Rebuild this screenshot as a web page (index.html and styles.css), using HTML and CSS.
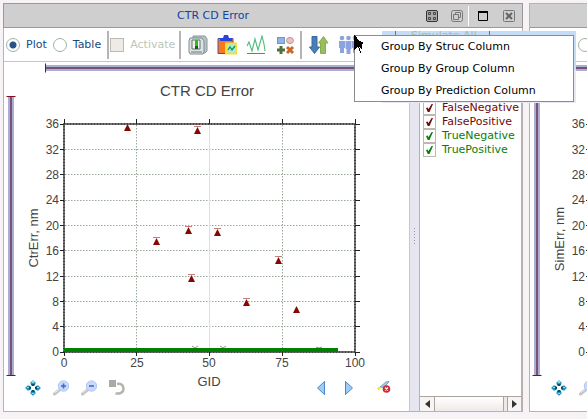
FILE: index.html
```html
<!DOCTYPE html>
<html lang="en">
<head>
<meta charset="utf-8">
<title>CTR CD Error</title>
<link rel="stylesheet" href="styles.css">
</head>
<body>
<svg class="defs" aria-hidden="true">
  <defs>
    <symbol id="i-move" viewBox="0 0 16 16">
      <g fill="#2595bf" stroke="#b9dbe8" stroke-width=".6">
        <path d="M8 0l3 3-1.500 2.500h-3L5 3z"/><path d="M8 16l3-3-1.500-2.500h-3L5 13z"/>
        <path d="M0 8l3-3 2.500 1.500v3L3 11z"/><path d="M16 8l-3-3-2.500 1.500v3L13 11z"/>
      </g>
      <path d="M6 4h4L9 6H7zM6 12h4l-1-2H7zM4 6v4l2-1V7zM12 6v4l-2-1V7z" fill="#0b5268"/>
      <path d="M7 1h2v2H7zM2 7h2v1H2zM12 7h2v1h-2zM7 13h2v1H7z" fill="#7fe0f5"/>
    </symbol>
    <symbol id="i-lens" viewBox="0 0 16 16">
      <path d="M1.500 14L7 9.500" stroke="#c4c4c4" stroke-width="3" stroke-linecap="round"/>
      <path d="M1.500 13L6 9.500" stroke="#e8e8e8" stroke-width="1"/>
      <circle cx="10.500" cy="6" r="5.200" fill="#c9d9fc" stroke="#b4c6f2"/>
      <path d="M8 6h5" stroke="#3d6fc8" stroke-width="1.600"/>
    </symbol>
  </defs>
</svg>
<main class="desktop">
  <section class="panel main-panel">
    <header class="titlebar">
      <h1>CTR CD Error</h1>
      <div class="window-buttons">
        <button aria-label="Tile"><svg width="12" height="12" viewBox="0 0 12 12" fill="none" stroke="#333"><rect x=".5" y=".5" width="11" height="11" rx="1.500" fill="#aaa"/><path d="M2.500 2.500h2v2h-2zM7.500 2.500h2v2h-2zM2.500 7.500h2v2h-2zM7.500 7.500h2v2h-2z" stroke="#444"/></svg></button>
        <button aria-label="Float"><svg width="12" height="12" viewBox="0 0 12 12" fill="none" stroke="#777"><rect x=".5" y=".5" width="11" height="11" rx="2"/><path d="M4.500 4V2.500h5v5H8M2.500 4.500h5v5h-5z"/></svg></button>
        <i class="window-sep"></i>
        <button aria-label="Maximize"><svg width="10" height="10" viewBox="0 0 10 10" fill="none" stroke="#000"><path d="M.5 1v8.500h9V1"/><path d="M0 1h10" stroke-width="2"/></svg></button>
        <button class="close" aria-label="Close"><svg width="12" height="12" viewBox="0 0 12 12" fill="none" stroke="#777"><rect x=".5" y=".5" width="11" height="11" rx="1"/><path d="M3 3l6 6M9 3L3 9" stroke="#666" stroke-width="2"/></svg></button>
      </div>
    </header>
    <div class="toolbar">
      <label class="choice"><input type="radio" name="view" checked>Plot</label>
      <label class="choice"><input type="radio" name="view">Table</label>
      <i class="sep"></i>
      <label class="choice off"><input type="checkbox" disabled>Activate</label>
      <i class="sep"></i>
      <div class="tools">
        <button aria-label="Save"><svg width="20" height="20" viewBox="0 0 20 20"><path d="M5 1h12l2 3v12l-2 2H5z" fill="#b9c4c8" stroke="#87969b"/><path d="M2 3h12l2 3v11l-1 2H2l-1-2V6z" fill="#dce2e5" stroke="#7d8b91"/><path d="M4 5h8v9H4z" fill="#eef3ee" stroke="#63746e"/><path d="M7 5h3v9H7z" fill="#32bb20"/><path d="M7 11h3v3H7z" fill="#195b18"/><path d="M3 17h11" stroke="#6c777d"/></svg></button>
        <button aria-label="Copy plot"><svg width="20" height="20" viewBox="0 0 20 20"><path d="M1 3.500h15v15H1z" fill="#f67a1c" stroke="#5848a0"/><path d="M3 6V3h3l1-3h4l1 3h3v3z" fill="#2946d8"/><rect x="9" y="8.500" width="10" height="10" fill="#a9e8ee" stroke="#efe238" stroke-width="2"/><path d="M11 15l2-3 2 3 3-4" fill="none" stroke="#19913f" stroke-width="1.300"/></svg></button>
        <button aria-label="Curve"><svg width="20" height="20" viewBox="0 0 20 20" fill="none"><path d="M1 11l2-4 3 9 3-12 3 11 4-14 2 8 1 7" stroke="#4dbd79" stroke-width="1.100"/><path d="M1 18.500h18" stroke="#777"/></svg></button>
        <button aria-label="Shapes"><svg width="20" height="20" viewBox="0 0 20 20"><rect x="2.500" y="2.500" width="7" height="6" fill="#8cb5ed" stroke="#7595bc"/><ellipse cx="15" cy="5.500" rx="3.500" ry="3" fill="#f2bfc1" stroke="#bd9297"/><path d="M6 11v8M2 15h8" stroke="#4e7041" stroke-width="3"/><path d="M12 12l6 6M18 12l-6 6" stroke="#cd6628" stroke-width="3"/></svg></button>
      </div>
      <i class="sep"></i>
      <div class="tools">
        <button aria-label="Sort"><svg width="20" height="20" viewBox="0 0 20 20"><path d="M3 1.500h5V12h2.500l-5 6.500L.5 12H3z" fill="#467fb9" stroke="#39699a"/><path d="M11.500 18.500h5V8H19l-4.500-6.500L9.500 8h2z" fill="#99be5d" stroke="#88ac4f"/></svg></button>
        <button aria-label="Group by" aria-haspopup="menu"><svg width="20" height="20" viewBox="0 0 20 20" fill="#8ba3e0"><circle cx="4" cy="3" r="2.300"/><circle cx="10.500" cy="3" r="2.300"/><circle cx="17" cy="3" r="2.300"/><path d="M1 6h6v7H6v5H2v-5H1zM7.500 6h6v8h-1v5h-4v-5h-1zM14 6h6v7h-1v5h-4v-5h-1z"/></svg></button>
      </div>
    </div>
    <div class="content">
      <div class="plot">
        <svg class="chart" viewBox="4 62 405 314" role="img" aria-label="CTR CD Error plot">
          <defs><path id="tri" d="M.5-3L4 4h-7z" fill="#850700"/><path id="bar" d="M-3-3.500h7" stroke="#c47d7b"/></defs>
          <path d="M46 68h355" stroke="#abaed2" stroke-width="6"/><path d="M46 68h355" stroke="#7b5078" stroke-width="2"/><path d="M45.500 63.500v9" stroke="#850c1e"/>
          <path d="M11 96v280" stroke="#abaed2" stroke-width="6"/><path d="M11 96v280" stroke="#7b5078" stroke-width="2"/><path d="M6.500 96.500h9M6.500 375.500h9" stroke="#850c1e"/>
          <text class="chart-title" x="207" y="96">CTR CD Error</text>
          <g stroke="#98a898" stroke-dasharray="1.500 1.500">
            <path d="M65 149.500h289M65 174.500h289M65 200.500h289M65 225.500h289M65 250.500h289M65 276.500h289M65 301.500h289M65 326.500h289M136.500 125v227M282.500 125v227"/>
          </g>
          <path d="M209.500 125v227" stroke="#dedede"/>
          <rect x="64" y="124" width="291" height="228" fill="none" stroke="#707070" stroke-width="2"/>
          <rect x="64" y="124" width="291" height="228" fill="none" stroke="#444" stroke-width="2" stroke-dasharray="1 2"/>
          <path d="M60 124.500h4M60 149.500h4M60 174.500h4M60 200.500h4M60 225.500h4M60 250.500h4M60 276.500h4M60 301.500h4M60 326.500h4M60 352.500h4M355 124.500h5M355 149.500h5M355 174.500h5M355 200.500h5M355 225.500h5M355 250.500h5M355 276.500h5M355 301.500h5M355 326.500h5M355 352.500h5M64.500 119v5M136.500 119v5M209.500 119v5M282.500 119v5M355.500 119v5M64.500 352v4M136.500 352v4M209.500 352v4M282.500 352v4M355.500 352v4" stroke="#222"/>
          <path d="M192 346l3 2 3-2M220 346l3 2 3-2M316 347l3 1 3-1" fill="none" stroke="#a98a7a"/>
          <path d="M64 350h274" stroke="#008000" stroke-width="4"/>
          <g class="ticks-y">
            <text x="59" y="128">36</text><text x="59" y="154">32</text><text x="59" y="179">28</text><text x="59" y="204">24</text><text x="59" y="230">20</text><text x="59" y="255">16</text><text x="59" y="281">12</text><text x="59" y="306">8</text><text x="59" y="331">4</text><text x="59" y="356">0</text>
          </g>
          <g class="ticks-x">
            <text x="64" y="367">0</text><text x="137" y="367">25</text><text x="209" y="367">50</text><text x="282" y="367">75</text><text x="355" y="367">100</text>
          </g>
          <text class="axis" transform="translate(38 238) rotate(-90)">CtrErr, nm</text>
          <use href="#tri" x="127" y="127"/><use href="#tri" x="197" y="130"/><use href="#tri" x="156" y="241"/><use href="#tri" x="188" y="230"/><use href="#tri" x="217" y="232"/><use href="#tri" x="191" y="278"/><use href="#tri" x="278" y="260"/><use href="#tri" x="246" y="302"/><use href="#tri" x="296" y="309"/>
          <use href="#bar" x="197" y="130"/><use href="#bar" x="156" y="241"/><use href="#bar" x="188" y="230"/><use href="#bar" x="217" y="232"/><use href="#bar" x="191" y="278"/><use href="#bar" x="278" y="260"/><use href="#bar" x="246" y="302"/>
        </svg>
        <div class="plot-tools">
          <div class="tool-group">
            <button aria-label="Pan"><svg width="16" height="16"><use href="#i-move"/></svg></button>
            <button aria-label="Zoom in"><svg width="16" height="16" viewBox="0 0 16 16"><use href="#i-lens"/><path d="M10.500 3.500v5" stroke="#3d6fc8" stroke-width="1.600"/></svg></button>
            <button aria-label="Zoom out"><svg width="16" height="16"><use href="#i-lens"/></svg></button>
            <button aria-label="Reset"><svg width="16" height="16" viewBox="0 0 16 16"><path d="M0 0h7v7H0z" fill="#aaa9a3"/><path d="M8 4c5-1 6.500 2 6.500 5 0 3-3 5-8 4.500" fill="none" stroke="#b4b3ae" stroke-width="2.500"/></svg></button>
          </div>
          <span class="axis-name">GID</span>
          <div class="tool-group">
            <button aria-label="Previous"><svg width="16" height="16" viewBox="0 0 16 16"><path d="M11.500 1.500v13l-7-6.500z" fill="#9fccf4" stroke="#4a86c2"/></svg></button>
            <button aria-label="Next"><svg width="16" height="16" viewBox="0 0 16 16"><path d="M4.500 1.500v13l7-6.500z" fill="#9fccf4" stroke="#4a86c2"/></svg></button>
            <button class="clear" aria-label="Clear highlight"><svg width="16" height="16" viewBox="0 0 16 16"><path d="M3 7l6-5 3-.5-5 6z" fill="#a9cce6" stroke="#75a2bd"/><path d="M0 8.500l2-2 2 1-2 3z" fill="#f1ed12"/><circle cx="9.500" cy="9" r="3.800" fill="#c92b30"/><path d="M8 7.500l3 3M11 7.500l-3 3" stroke="#fff" stroke-width="1.200"/></svg></button>
          </div>
        </div>
      </div>
      <div class="splitter"></div>
      <aside class="legend">
        <div class="legend-list">
          <label class="neg"><input type="checkbox" checked>FalseNegative</label>
          <label class="neg"><input type="checkbox" checked>FalsePositive</label>
          <label class="pos"><input type="checkbox" checked>TrueNegative</label>
          <label class="pos"><input type="checkbox" checked>TruePositive</label>
        </div>
        <div class="scrollbar">
          <button aria-label="Scroll left"><svg width="5" height="8" viewBox="0 0 5 8"><path d="M5 0v8L0 4z" fill="#333"/></svg></button>
          <span class="thumb"></span>
          <button aria-label="Scroll right"><svg width="5" height="8" viewBox="0 0 5 8"><path d="M0 0v8l5-4z" fill="#333"/></svg></button>
        </div>
      </aside>
    </div>
  </section>

  <section class="panel side-panel">
    <header class="titlebar"></header>
    <div class="toolbar end"><input type="radio" name="side-view" aria-label="Plot"></div>
    <div class="plot">
      <svg class="chart" viewBox="530 62 57 314" role="img" aria-label="Simulated error plot">
        <path d="M572 68h15" stroke="#abaed2" stroke-width="6"/><path d="M572 68h15" stroke="#7b5078" stroke-width="2"/>
        <path d="M573 94.500h3M575.500 72v20" stroke="#ccc"/>
        <path d="M537 96v280" stroke="#abaed2" stroke-width="6"/><path d="M537 96v280" stroke="#7b5078" stroke-width="2"/><path d="M532.500 375.500h9" stroke="#850c1e"/>
        <g class="ticks-y">
          <text x="585" y="128">36</text><text x="585" y="154">32</text><text x="585" y="179">28</text><text x="585" y="204">24</text><text x="585" y="230">20</text><text x="585" y="255">16</text><text x="585" y="281">12</text><text x="585" y="306">8</text><text x="585" y="331">4</text><text x="585" y="356">0</text>
        </g>
        <path d="M586 124.500h1M586 149.500h1M586 174.500h1M586 200.500h1M586 225.500h1M586 250.500h1M586 276.500h1M586 301.500h1M586 326.500h1M586 352.500h1" stroke="#222"/>
        <text class="axis" transform="translate(564 239) rotate(-90)">SimErr, nm</text>
      </svg>
      <div class="plot-tools">
        <div class="tool-group">
          <button aria-label="Pan"><svg width="16" height="16"><use href="#i-move"/></svg></button>
          <button aria-label="Zoom in"><svg width="16" height="16"><use href="#i-lens"/></svg></button>
        </div>
      </div>
    </div>
  </section>
</main>

<div class="popup-back"><button class="simulate">Simulate All</button></div>
<div class="menu" role="menu">
  <button role="menuitem">Group By Struc Column</button>
  <button role="menuitem">Group By Group Column</button>
  <button role="menuitem">Group By Prediction Column</button>
</div>
<svg class="cursor" width="11" height="19" viewBox="0 0 11 19" shape-rendering="crispEdges"><path d="M1 0v15l3-3 2 2 1 4 1-1-2-5 3 2V9l2-1-2-1-2-1-2-1-1-2-1-1z"/></svg>
</body>
</html>
```

FILE: styles.css
```css
* { box-sizing: border-box; }
body {
  margin: 0;
  background: #f6f2f6;
  color: #000;
  font: 11px/14px "DejaVu Sans", sans-serif;
  overflow: hidden;
}
button {
  display: flex;
  align-items: center;
  padding: 0;
  border: 0;
  background: none;
  color: inherit;
  font: inherit;
}
svg { display: block; flex: none; }
.defs { position: absolute; width: 0; height: 0; }

.desktop {
  display: flex;
  gap: 6px;
  min-height: 100vh;
  padding: 3px 0 7px 3px;
}
.panel {
  display: flex;
  flex-direction: column;
  min-width: 0;
  background: #fff;
  border: 1px solid #b8b2b2;
}
.main-panel { flex: 1; border-right-color: #b9b0ac; }
.side-panel { flex: 0 0 58px; border-right: 0; overflow: hidden; }

.titlebar {
  display: grid;
  grid-template-columns: 1fr auto;
  align-items: center;
  height: 25px;
  margin: -1px -1px 0;
  background: #cfcfcf;
  border: 1px solid #999;
}
.titlebar h1 {
  grid-area: 1 / 1 / 2 / 3;
  margin: 0;
  padding-right: 100px;
  text-align: center;
  color: #1243a0;
  font-size: 11px;
  font-weight: 400;
}
.window-buttons {
  grid-area: 1 / 2;
  display: flex;
  align-items: center;
  gap: 9px;
  padding-right: 7px;
}
.window-buttons button:nth-child(2) { margin-left: 4px; }
.window-buttons .close { margin-left: 6px; }
.window-sep { width: 1px; height: 20px; background: #fff; margin-left: -4px; }

.toolbar {
  display: flex;
  align-items: center;
  height: 34px;
  border-bottom: 1px solid #c5c5c5;
  padding-left: 2px;
  color: #164a80;
}
.toolbar.end { justify-content: flex-end; padding: 0; }
.toolbar.end input { margin-right: -5px; }
.choice { display: flex; align-items: center; gap: 6px; margin-right: 6px; }
.choice.off { color: #b9c6bb; margin-right: 4px; }
.toolbar input {
  appearance: none;
  flex: none;
  width: 14px;
  height: 14px;
  margin: 0;
  border: 1px solid #9bb59b;
  background: #fff;
}
.toolbar input[type="radio"] { border-radius: 50%; }
.toolbar input[type="radio"]:checked { background: radial-gradient(circle, #2b5288 3px, #fff 4px); }
.toolbar input[type="checkbox"] { background: #eeeae6; border-color: #c0b8b4; }
.sep { flex: none; width: 2px; height: 28px; margin-right: 1px; background: #b5b5b5; }
.tools { display: flex; gap: 9px; padding: 0 5px 0 6px; }

.content {
  flex: 1;
  display: grid;
  grid-template-columns: 1fr 10px 103px;
}
.plot { min-width: 0; }
.chart { width: 100%; }
.chart text { font-family: "Liberation Sans", Arial, sans-serif; fill: #444; }
.chart .chart-title { font-size: 15px; text-anchor: middle; }
.chart .axis { font-size: 13px; text-anchor: middle; }
.ticks-y text { font-size: 12px; text-anchor: end; }
.ticks-x text { font-size: 12px; text-anchor: middle; }

.plot-tools {
  display: flex;
  justify-content: space-between;
  padding: 4px 16px 0 21px;
}
.tool-group { display: flex; gap: 12px; }
.tool-group .clear { margin-left: 8px; }
.axis-name {
  margin: -6px 0 0 -20px;
  color: #444;
  font: 13px/16px "Liberation Sans", Arial, sans-serif;
}

.splitter {
  display: grid;
  place-items: center;
  background: #e6e6f0;
  border-left: 1px solid #c8c8c8;
}
.splitter::before {
  content: "";
  width: 1px;
  height: 17px;
  background: repeating-linear-gradient(#99a 0 1px, transparent 1px 3px);
}
.legend {
  display: flex;
  flex-direction: column;
  min-width: 0;
  border-left: 1px solid #b9b0ac;
  border-right: 1px solid #b9b0ac;
}
.legend-list { flex: 1; padding: 39px 0 0 3px; overflow: hidden; }
.legend-list label { display: flex; align-items: center; gap: 6px; height: 14px; }
.neg { color: #700808; }
.pos { color: #087c08; }
.legend-list input {
  appearance: none;
  flex: none;
  width: 13px;
  height: 14px;
  margin: 0;
  border: 1px solid #bdb8b4;
  color: inherit;
}
.legend-list input::before {
  content: "";
  display: block;
  height: 8px;
  margin: 2px 2px 0;
  background: currentColor;
  clip-path: polygon(0 50%, 25% 45%, 35% 65%, 80% 0, 100% 0, 50% 100%, 25% 100%);
}
.scrollbar { display: flex; height: 15px; border-top: 1px solid #aaa4a0; background: #eee9e6; }
.scrollbar button { width: 14px; justify-content: center; background: #f8f4f4; }
.scrollbar button:last-child { border-left: 1px solid #aaa4a0; }
.thumb {
  flex: 1;
  margin-right: 3px;
  border: solid #aaa4a0;
  border-width: 0 1px;
  background: linear-gradient(#fff, #f0eaea);
}

.popup-back {
  position: absolute;
  left: 382px;
  top: 31px;
  width: 194px;
  height: 72px;
  padding-left: 13px;
  background: linear-gradient(#c4dcf6 39px, #e9e8f2 39px);
}
.simulate {
  width: 95px;
  height: 16px;
  padding: 0 0 6px 15px;
  border: solid #5b7795;
  border-width: 0 1px;
  color: #a9bdae;
}
.menu {
  position: absolute;
  left: 354px;
  top: 35px;
  width: 220px;
  background: #fff;
  border: 1px solid #8c8c8c;
}
.menu button { width: 100%; height: 22px; padding-left: 26px; }
.menu button:last-child { height: 21px; }
.cursor { position: absolute; left: 353px; top: 35px; }
```
